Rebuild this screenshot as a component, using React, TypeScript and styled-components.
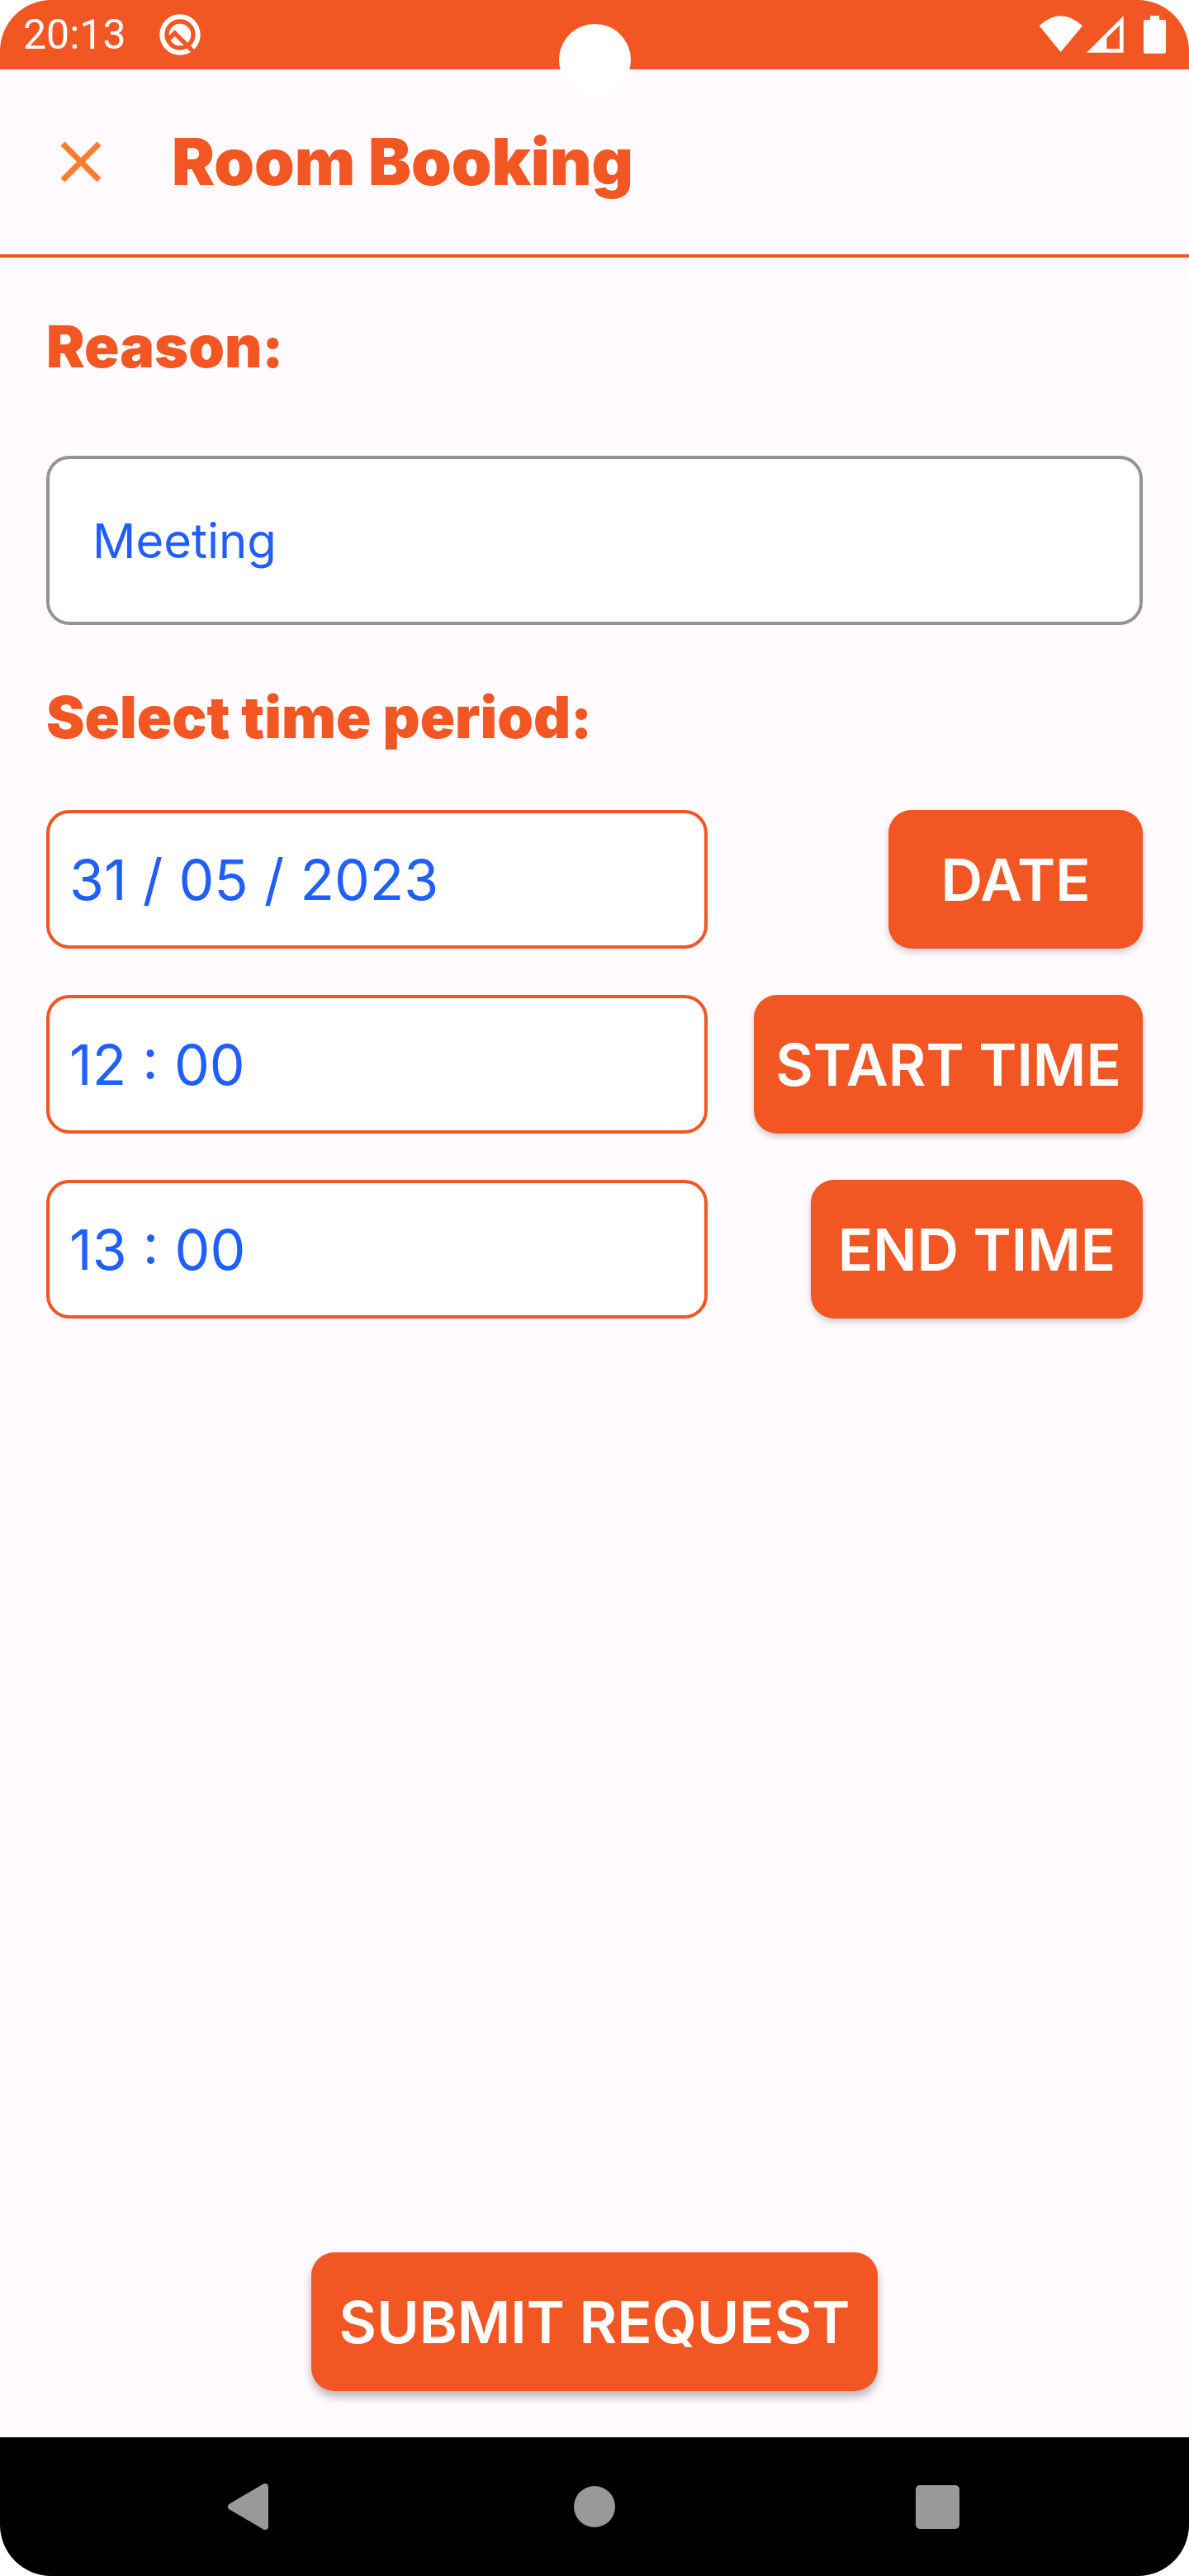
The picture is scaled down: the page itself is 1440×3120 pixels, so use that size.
import React, { useState } from "react";
import styled, { createGlobalStyle, ThemeProvider } from "styled-components";

const theme = {
  orange: "#f15623",
  orangeLight: "#ff7b2d",
  blue: "#1f5eff",
  surface: "#fffbff",
  outline: "#949494",
  navIcon: "#999999",
  radius: "28px",
  font: '"Inter", "Liberation Sans", sans-serif',
};

const GlobalStyle = createGlobalStyle`
  *, *::before, *::after { box-sizing: border-box; }
  body { margin: 0; background: #ffffff; }
`;

const Screen = styled.div`
  position: relative;
  display: flex;
  flex-direction: column;
  min-height: 100vh;
  overflow: hidden;
  border-radius: 62px;
  background: ${(p) => p.theme.surface};
  font-family: ${(p) => p.theme.font};
`;

const StatusBar = styled.div`
  display: flex;
  align-items: center;
  justify-content: space-between;
  height: 84px;
  padding: 0 28px;
  background: ${(p) => p.theme.orange};
  color: #ffffff;
`;

const StatusGroup = styled.div<{ $gap: number }>`
  display: flex;
  align-items: center;
  gap: ${(p) => p.$gap}px;
`;

const Clock = styled.time`
  font-family: Roboto, sans-serif;
  font-size: 50px;
  line-height: 56px;
`;

const Camera = styled.div`
  position: absolute;
  top: 29px;
  left: 50%;
  width: 87px;
  height: 87px;
  margin-left: -43px;
  border-radius: 50%;
  background: #ffffff;
`;

const Header = styled.header`
  display: flex;
  align-items: center;
  gap: 68px;
  height: 228px;
  padding: 0 56px;
  border-bottom: 4px solid ${(p) => p.theme.orange};
`;

const IconButton = styled.button`
  display: flex;
  align-items: center;
  justify-content: center;
  padding: 0;
  border: 0;
  background: none;
  cursor: pointer;
`;

const CloseButton = styled(IconButton)`
  width: 84px;
  height: 84px;
`;

const Title = styled.h1`
  margin: 0;
  color: ${(p) => p.theme.orange};
  font-size: 78px;
  font-weight: 900;
  line-height: 104px;
`;

const Form = styled.form`
  flex: 1;
  display: flex;
  flex-direction: column;
  padding: 56px;
`;

const labelText = `
  font-size: 70px;
  font-weight: 900;
  line-height: 104px;
`;

const ReasonLabel = styled.label`
  ${labelText}
  margin-bottom: 80px;
  color: ${(p) => p.theme.orange};
`;

const PeriodLabel = styled.h2`
  ${labelText}
  margin: 60px 0;
  color: ${(p) => p.theme.orange};
`;

const Field = styled.input`
  width: 100%;
  min-width: 0;
  border: 4px solid ${(p) => p.theme.orange};
  border-radius: ${(p) => p.theme.radius};
  background: #ffffff;
  color: ${(p) => p.theme.blue};
  font-family: inherit;
  outline: none;
`;

const ReasonField = styled(Field)`
  height: 205px;
  padding: 0 52px;
  border-color: ${(p) => p.theme.outline};
  font-size: 58px;
`;

const PeriodField = styled(Field)`
  height: 168px;
  padding: 0 24px;
  font-size: 68px;
`;

const PeriodGrid = styled.div`
  display: grid;
  grid-template-columns: 1fr auto;
  gap: 56px;
`;

const Button = styled.button<{ $minWidth: number; $raised?: boolean }>`
  justify-self: end;
  min-width: ${(p) => p.$minWidth}px;
  height: 168px;
  padding: 0 24px;
  border: 0;
  border-radius: ${(p) => p.theme.radius};
  background: ${(p) => p.theme.orange};
  box-shadow: ${(p) =>
    p.$raised
      ? "0 7px 12px rgba(0, 0, 0, 0.28)"
      : "0 4px 8px rgba(0, 0, 0, 0.2)"};
  color: #ffffff;
  font-family: inherit;
  font-size: 70px;
  font-weight: 600;
  white-space: nowrap;
  cursor: pointer;
`;

const SubmitRow = styled.div`
  display: flex;
  justify-content: center;
  margin-top: auto;
`;

const NavBar = styled.nav`
  display: grid;
  grid-template-columns: repeat(3, 1fr);
  height: 168px;
  padding: 0 96px;
  background: #000000;
`;

const BuildIcon = () => (
  <svg width="50" height="50" viewBox="571 51 150 150" aria-hidden="true">
    <circle cx="646" cy="126" r="65" fill="none" stroke="#fff" strokeWidth="18" />
    <circle cx="646" cy="126" r="40" fill="#fff" />
    <path d="M600 147 627 120 704 197" fill="none" stroke={theme.orange} strokeWidth="16" />
  </svg>
);

const WifiIcon = () => (
  <svg width="54" height="46" viewBox="173 57 162 138" aria-hidden="true">
    <path d="M175 94Q253 21 332 94L253 189Z" fill="#fff" />
  </svg>
);

const SignalIcon = () => (
  <svg width="45" height="46" viewBox="346 57 135 138" aria-hidden="true">
    <path fillRule="evenodd" d="M346 191 480 58V191ZM419 138V177H466V92Z" fill="#fff" />
  </svg>
);

const BatteryIcon = () => (
  <svg width="27" height="46" viewBox="555 57 81 138" aria-hidden="true">
    <path d="M579 57H612V72H630Q636 72 636 78V188Q636 194 630 194H561Q555 194 555 188V78Q555 72 561 72H579Z" fill="#fff" />
  </svg>
);

const CloseIcon = () => (
  <svg width="50" height="50" viewBox="0 0 50 50" aria-hidden="true">
    <path d="M3 3 47 47M47 3 3 47" stroke={theme.orangeLight} strokeWidth="7" />
  </svg>
);

const NavIcon = ({ children }: { children: React.ReactNode }) => (
  <svg
    width="56"
    height="56"
    viewBox="0 0 56 56"
    fill={theme.navIcon}
    stroke={theme.navIcon}
    strokeLinejoin="round"
    aria-hidden="true"
  >
    {children}
  </svg>
);

export default function App() {
  const [reason, setReason] = useState("Meeting");
  const periods = [
    { value: "31 / 05 / 2023", action: "DATE", width: 308 },
    { value: "12 : 00", action: "START TIME", width: 471 },
    { value: "13 : 00", action: "END TIME", width: 402 },
  ];

  return (
    <ThemeProvider theme={theme}>
      <GlobalStyle />
      <Screen>
        <StatusBar>
          <StatusGroup $gap={40}>
            <Clock>20:13</Clock>
            <BuildIcon />
          </StatusGroup>
          <StatusGroup $gap={24}>
            <StatusGroup $gap={4}>
              <WifiIcon />
              <SignalIcon />
            </StatusGroup>
            <BatteryIcon />
          </StatusGroup>
        </StatusBar>
        <Camera />

        <Header>
          <CloseButton type="button" aria-label="Close">
            <CloseIcon />
          </CloseButton>
          <Title>Room Booking</Title>
        </Header>

        <Form onSubmit={(e) => e.preventDefault()}>
          <ReasonLabel htmlFor="reason">Reason:</ReasonLabel>
          <ReasonField
            id="reason"
            value={reason}
            onChange={(e) => setReason(e.target.value)}
          />

          <PeriodLabel>Select time period:</PeriodLabel>
          <PeriodGrid>
            {periods.map((p) => (
              <React.Fragment key={p.action}>
                <PeriodField aria-label={p.action} value={p.value} readOnly />
                <Button type="button" $minWidth={p.width}>
                  {p.action}
                </Button>
              </React.Fragment>
            ))}
          </PeriodGrid>

          <SubmitRow>
            <Button type="submit" $minWidth={686} $raised>
              SUBMIT REQUEST
            </Button>
          </SubmitRow>
        </Form>

        <NavBar>
          <IconButton type="button" aria-label="Back">
            <NavIcon>
              <path d="M4 28 45 4V52Z" strokeWidth="8" />
            </NavIcon>
          </IconButton>
          <IconButton type="button" aria-label="Home">
            <NavIcon>
              <circle cx="28" cy="28" r="25" stroke="none" />
            </NavIcon>
          </IconButton>
          <IconButton type="button" aria-label="Recent apps">
            <NavIcon>
              <rect x="1" y="2" width="53" height="53" rx="5" stroke="none" />
            </NavIcon>
          </IconButton>
        </NavBar>
      </Screen>
    </ThemeProvider>
  );
}
